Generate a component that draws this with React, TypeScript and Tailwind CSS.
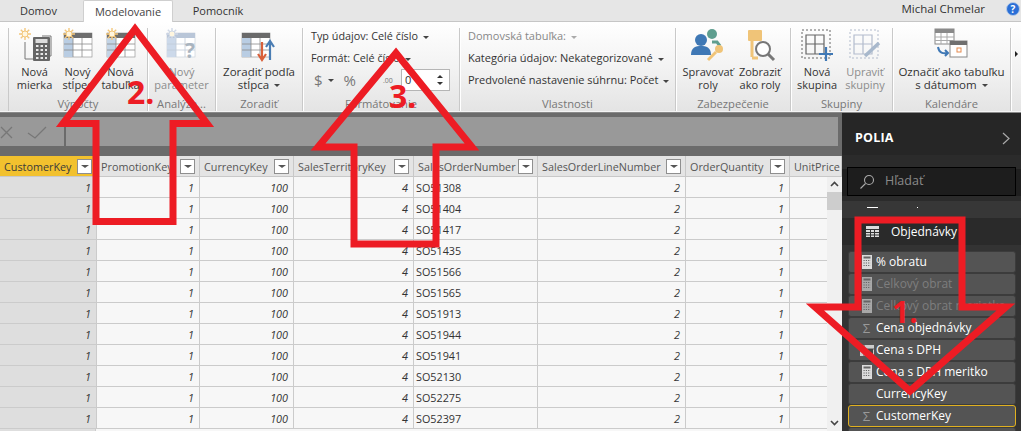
import React from "react";

const font = { fontFamily: '"Open Sans","Noto Sans",sans-serif' };

function Star({ x = 0, y = 0, faded = false }: { x?: number; y?: number; faded?: boolean }) {
  const c = faded ? "#cfd8e6" : "#f3c77c";
  return (
    <g transform={`translate(${x} ${y})`} stroke={c} strokeWidth="1.4">
      <path d="M6 0v12M0 6h12M1.8 1.8l8.4 8.4M10.2 1.8l-8.4 8.4" />
      <circle cx="6" cy="6" r="3" fill="#fff6df" stroke={c} strokeWidth="1" />
    </g>
  );
}

function TableIcon({ head = "#6e6e6e", col = "#b9cde3", x = 0, y = 0, line = "#8a8a8a" }: { head?: string; col?: string; x?: number; y?: number; line?: string }) {
  return (
    <g transform={`translate(${x} ${y})`}>
      <rect x="0" y="0" width="28" height="24" fill="#fff" stroke={line} strokeWidth="0.6" />
      <rect x="0" y="0" width="28" height="5" fill={head} />
      <rect x="0" y="5" width="9" height="19" fill={col} />
      <path d="M9 5v19M18 5v19M0 11h28M0 17h28" stroke={line} strokeWidth="0.8" />
    </g>
  );
}

function RibbonBtn({ w, icon, lines, off = false }: { w: number; icon: React.ReactNode; lines: string[]; off?: boolean }) {
  return (
    <div className={`flex flex-col items-center shrink-0 ${off ? "text-[#8c8c8c]" : "text-[#333]"}`} style={{ width: w }}>
      <div className="h-[37px] w-full flex justify-center">{icon}</div>
      <div className="text-[11px] leading-[13px] text-center whitespace-nowrap mt-[1px]">
        {lines.map((l, i) => (
          <div key={i}>{l}</div>
        ))}
      </div>
    </div>
  );
}

function Caret({ off = false }: { off?: boolean }) {
  return <span className={`inline-block align-middle ml-[5px] w-0 h-0 border-x-[3px] border-x-transparent border-t-[3px] ${off ? "border-t-[#aaa]" : "border-t-[#444]"}`} />;
}

function Group({ w, label, children, className = "" }: { w: number; label: string; children: React.ReactNode; className?: string }) {
  return (
    <div className="shrink-0 h-full flex flex-col border-r border-[#c9c9c9] shadow-[1px_0_0_#fff]" style={{ width: w }}>
      <div className={`flex-1 min-h-0 ${className}`}>{children}</div>
      <div className="h-[20px] text-[11.2px] text-[#777] text-center leading-[26px]">{label}</div>
    </div>
  );
}

const ic = "w-[40px] h-[34px]";

const cols = [
  { n: "CustomerKey", w: 97 },
  { n: "PromotionKey", w: 103 },
  { n: "CurrencyKey", w: 94 },
  { n: "SalesTerritoryKey", w: 120 },
  { n: "SalesOrderNumber", w: 124 },
  { n: "SalesOrderLineNumber", w: 148 },
  { n: "OrderQuantity", w: 104 },
  { n: "UnitPrice", w: 52 },
];

const orders = ["SO51308", "SO51404", "SO51417", "SO51435", "SO51566", "SO51565", "SO51913", "SO51944", "SO51941", "SO52130", "SO52275", "SO52397"];
const vals = ["1", "1", "100", "4", "", "2", "1", ""];

function Filter() {
  return (
    <span className="absolute right-[4px] top-[3px] w-[15px] h-[15px] bg-white border border-[#8f8f8f] flex items-center justify-center">
      <span className="w-0 h-0 border-x-[4px] border-x-transparent border-t-[3px] border-t-[#555]" />
    </span>
  );
}

function DataTable() {
  return (
    <div className="relative flex-1 min-h-0 overflow-hidden bg-[#f7f7f7]">
      <div className="flex h-[21px] bg-[#e4e4e4] border-b border-[#c8c8c8]">
        {cols.map((c, i) => (
          <div key={c.n} className={`relative shrink-0 h-full border-r border-[#c8c8c8] pl-[4px] text-[10.8px] leading-[21px] whitespace-nowrap overflow-hidden ${i === 0 ? "bg-[#f2c12e] text-[#3a3a3a]" : "text-[#555]"}`} style={{ width: c.w }}>
            {c.n}
            {i < 7 && <Filter />}
          </div>
        ))}
      </div>
      {orders.map((o) => (
        <div key={o} className="flex h-[21px] border-b border-[#cbcbcb]">
          {cols.map((c, i) => (
            <div key={c.n} className={`shrink-0 h-full border-r border-[#cbcbcb] text-[10.8px] leading-[21px] text-[#333] ${i === 0 ? "bg-[#dedede]" : ""} ${i === 4 ? "text-left pl-[2px]" : "text-right italic pr-[5px]"}`} style={{ width: c.w }}>
              {i === 4 ? o : vals[i]}
            </div>
          ))}
        </div>
      ))}
      <div className="flex h-[3px]">
        <div className="w-[96px] bg-[#dedede] border-r border-[#cbcbcb]" />
      </div>
      <div className="absolute right-0 top-[21px] bottom-0 w-[15px] bg-[#f0f0f0] flex flex-col items-center">
        <svg width="15" height="15" viewBox="0 0 15 15" fill="none" stroke="#444" strokeWidth="1.6"><path d="M4 9l3.5-3.5L11 9" /></svg>
        <div className="w-full h-[18px] bg-[#cdcdcd]" />
        <div className="flex-1" />
        <svg width="15" height="15" viewBox="0 0 15 15" fill="none" stroke="#444" strokeWidth="1.6"><path d="M4 5l3.5 3.5L11 5" /></svg>
      </div>
    </div>
  );
}

function Calc({ dim = false }: { dim?: boolean }) {
  return (
    <svg width="10" height="14" viewBox="0 0 10 14" className="shrink-0">
      <rect width="10" height="14" fill={dim ? "#a8a8a8" : "#dcdcdc"} />
      <rect x="1.5" y="1.5" width="7" height="2" fill="#666" />
      <path d="M1.5 5.5h7M1.5 8h7M1.5 10.5h7" stroke="#666" strokeWidth="1" strokeDasharray="1.2 1.1" />
    </svg>
  );
}

function Field({ name, kind, dim = false, sel = false }: { name: string; kind: string; dim?: boolean; sel?: boolean }) {
  return (
    <div className={`h-[22px] shrink-0 mx-[6px] w-[168px] rounded-[3px] bg-[#545454] flex items-center border ${sel ? "border-[#e0b020]" : "border-[#3c3c3c]"}`}>
      <span className="w-[29px] flex justify-center shrink-0 pl-[6px] text-[#999] text-[13px] leading-none">
        {kind === "calc" && <Calc dim={dim} />}
        {kind === "sum" && "Σ"}
        {kind === "fx" && (
          <svg width="14" height="11" viewBox="0 0 14 11"><rect width="14" height="11" fill="#ccc" /><path d="M4 0v11M0 4h14" stroke="#555" /><rect x="7" y="4" width="6" height="6" fill="#444" /></svg>
        )}
      </span>
      <span className={`text-[12px] whitespace-nowrap -ml-[2px] ${dim ? "text-[#7e7e7e]" : "text-white"}`}>{name}</span>
    </div>
  );
}

function FieldsPane() {
  return (
    <div className="w-[179px] shrink-0 bg-[#1f1f1f] flex flex-col overflow-hidden">
      <div className="h-[42px] shrink-0 bg-[#262626] flex items-center justify-between pl-[13px] pr-[10px] pt-[9px]">
        <span className="text-white font-bold text-[12.5px] tracking-[0.2px]">POLIA</span>
        <svg width="9" height="13" viewBox="0 0 9 13" fill="none" stroke="#aaa" strokeWidth="1.2"><path d="M1 1l6 5.5L1 12" /></svg>
      </div>
      <div className="h-[14px] shrink-0 bg-[#2b2b2b]" />
      <div className="relative mx-[5px] h-[29px] -mt-[2px] shrink-0 bg-[#1d1d1d] border border-black flex items-center pl-[11px] gap-[10px]">
        <svg width="16" height="16" viewBox="0 0 16 16" fill="none" stroke="#aaa" strokeWidth="1.1"><circle cx="10" cy="6" r="4.5" /><path d="M6.5 9.5L1.5 14.5" /></svg>
        <span className="text-[#8a8a8a] text-[12.5px]">Hľadať</span>
      </div>
      <div className="h-[5px] shrink-0 bg-[#2b2b2b]" />
      <div className="h-[17px] shrink-0 bg-[#373737] relative">
        <span className="absolute left-[25px] top-[6px] w-[11px] h-[1px] bg-white" />
        <span className="absolute left-[75px] top-[6px] w-[1px] h-[1px] bg-white" />
      </div>
      <div className="h-[27px] shrink-0 bg-[#2a2a2a] flex items-center pl-[24px]">
        <svg width="13" height="11" viewBox="0 0 13 11"><rect width="13" height="11" fill="#ddd" /><path d="M0 3.5h13M0 6.5h13M0 9h13M4.5 3v8M8.5 3v8" stroke="#333" /></svg>
        <span className="text-white text-[12px] ml-[12px]">Objednávky</span>
      </div>
      <div className="h-[6px] shrink-0 bg-[#333]" />
      <div className="flex flex-col bg-[#333]">
        <Field name="% obratu" kind="calc" />
        <Field name="Celkový obrat" kind="calc" dim />
        <Field name="Celkový obrat meriatko" kind="calc" dim />
        <Field name="Cena objednávky" kind="sum" />
        <Field name="Cena s DPH" kind="fx" />
        <Field name="Cena s DPH meritko" kind="calc" />
        <Field name="CurrencyKey" kind="" />
        <Field name="CustomerKey" kind="sum" sel />
        <Field name="" kind="" />
      </div>
    </div>
  );
}

function Overlay() {
  return (
    <div className="absolute inset-0 pointer-events-none overflow-hidden">
      <svg width="1021" height="431" viewBox="0 0 1021 431" fill="none" stroke="#ed1c24" strokeWidth="7" strokeLinejoin="miter" className="absolute inset-0">
        <path d="M135 29L63 123.5H96V221.5H173V123.5H207Z" />
        <path d="M396 53L318 147H354V244H436V147H472Z" />
        <path d="M858 220H962V307H1006L910 391L815 307H858Z" />
      </svg>
      <span className="absolute left-[127px] top-[72px] text-[#ed1c24] font-bold text-[32px] leading-[40px]">2.</span>
      <span className="absolute left-[389px] top-[76px] text-[#ed1c24] font-bold text-[32px] leading-[40px]">3.</span>
      <span className="absolute left-[892px] top-[292px] text-[#ed1c24] font-bold text-[30px] leading-[40px]">1.</span>
    </div>
  );
}

export default function App() {
  return (
    <div className="relative w-[1021px] h-[431px] overflow-hidden bg-[#6b6b6b] flex flex-col" style={font}>
      {/* tabs */}
      <div className="h-[22px] shrink-0 bg-[#e6e6e6] border-b border-[#c6c6c6] flex items-stretch text-[11px] text-[#333] relative">
        <div className="w-[83px] pl-[20px] leading-[21px]">Domov</div>
        <div className="w-[90px] h-[22px] bg-white border border-b-0 border-[#cfcfcf] rounded-t-[2px] text-center leading-[21px] text-[#444] z-10">Modelovanie</div>
        <div className="w-[90px] text-center leading-[21px]">Pomocník</div>
        <div className="flex-1" />
        <div className="leading-[17px] pr-[36px] text-[#333] text-[11.5px]">Michal Chmelar</div>
        <svg width="14" height="14" viewBox="0 0 14 14" className="absolute right-[1px] top-[2px]"><circle cx="7" cy="7" r="6.5" fill="#2a6fd6" stroke="#b6cbe8" /><text x="7" y="10.5" textAnchor="middle" fontSize="10" fontWeight="700" fill="#fff">?</text></svg>
      </div>
      {/* ribbon */}
      <div className="h-[90px] shrink-0 bg-gradient-to-b from-[#ffffff] via-[#f3f3f3] to-[#e4e4e4] flex pt-[6px] border-b border-[#f4f4f4]">
        <div className="w-[9px] shrink-0 border-r border-[#c9c9c9]" />
        <Group w={139} label="Výpočty" className="flex pl-[4px]">
          <RibbonBtn w={43} lines={["Nová", "mierka"]} icon={
            <svg className={ic} viewBox="0 0 40 34" fill="none"><path d="M10 14v17h11M27 8h9v20h-2" stroke="#777" /><rect x="18" y="9" width="17" height="24" rx="1" fill="#666" /><rect x="20.5" y="11" width="12" height="4" fill="#ddd" /><path d="M21 18h11M21 22h11M21 26h11M21 30h11" stroke="#e8e8e8" strokeWidth="2" strokeDasharray="2.5 2" /><Star x={4} y={0} /></svg>
          } />
          <RibbonBtn w={43} lines={["Nový", "stĺpec"]} icon={
            <svg className={ic} viewBox="0 0 40 34"><TableIcon x={6} y={5} /><Star x={5} y={0} /></svg>
          } />
          <RibbonBtn w={43} lines={["Nová", "tabuľka"]} icon={
            <svg className={ic} viewBox="0 0 40 34"><TableIcon x={6} y={5} col="#c3d4e6" /><Star x={5} y={0} /></svg>
          } />
        </Group>
        <Group w={68} label="Analýza..." className="flex justify-center">
          <RibbonBtn w={60} off lines={["Nový", "parameter"]} icon={
            <svg className={ic} viewBox="0 0 40 34"><TableIcon x={5} y={5} head="#b9c6d8" col="#ccd9ea" line="#c2cbd8" /><Star x={4} y={0} faded /><text x="28" y="30" fontSize="21" fontWeight="700" fill="#a9b4bf" textAnchor="middle">?</text></svg>
          } />
        </Group>
        <Group w={87} label="Zoradiť" className="flex justify-center">
          <div className="flex flex-col items-center text-[#333]">
            <div className="h-[37px]">
              <svg className={ic} viewBox="0 0 40 34"><TableIcon x={3} y={5} head="#6a6a6a" /><path d="M23 14v17M19 26l4 6 4-6" stroke="#d9603a" strokeWidth="2.2" fill="none" /><path d="M31 32V14M27 19l4-6 4 6" stroke="#4a7db3" strokeWidth="2.2" fill="none" /></svg>
            </div>
            <div className="text-[11.5px] leading-[13px] text-center whitespace-nowrap mt-[1px]">Zoradiť podľa<br />stĺpca<Caret /></div>
          </div>
        </Group>
        <Group w={157} label="Formátovanie" className="pl-[8px] text-[10.8px] text-[#333] leading-[22px]">
          <div className="-mt-[3px] whitespace-nowrap">Typ údajov: Celé číslo<Caret /></div>
          <div className="whitespace-nowrap">Formát: Celé číslo<Caret /></div>
          <div className="flex items-center h-[22px] text-[#777] text-[15px]">
            <span className="ml-[3px]">$</span><Caret />
            <span className="ml-[10px]">%</span>
            <span className="ml-[27px] w-[18px] text-[7px] leading-[7px] text-[#777]">.00</span>
            <span className="w-[49px] h-[22px] bg-white border border-[#b5b5b5] text-[11px] text-[#333] leading-[20px] pl-[3px] relative block">0
              <span className="absolute right-[6px] top-[5px] w-0 h-0 border-x-[3px] border-x-transparent border-b-[3px] border-b-[#333]" />
              <span className="absolute right-[6px] bottom-[5px] w-0 h-0 border-x-[3px] border-x-transparent border-t-[3px] border-t-[#333]" />
            </span>
          </div>
        </Group>
        <Group w={216} label="Vlastnosti" className="pl-[8px] text-[11px] text-[#333] leading-[22px]">
          <div className="-mt-[3px] text-[#888] whitespace-nowrap">Domovská tabuľka:<Caret off /></div>
          <div className="whitespace-nowrap">Kategória údajov: Nekategorizované<Caret /></div>
          <div className="whitespace-nowrap">Predvolené nastavenie súhrnu: Počet<Caret /></div>
        </Group>
        <Group w={115} label="Zabezpečenie" className="flex pl-[6px]">
          <RibbonBtn w={52} lines={["Spravovať", "roly"]} icon={
            <svg className={ic} viewBox="0 0 40 34"><circle cx="24" cy="6" r="5" fill="#5f9e8f" /><circle cx="13" cy="12" r="6" fill="#3f78b5" /><path d="M3 27c0-8 5-9 10-9s10 1 10 9z" fill="#3f78b5" /><path d="M24 14l5 0 3 4" stroke="#5f9e8f" strokeWidth="3" fill="none" /><circle cx="31" cy="21" r="4" fill="#f0c478" /><path d="M28 24l-8 8" stroke="#f0c478" strokeWidth="3" /></svg>
          } />
          <RibbonBtn w={52} lines={["Zobraziť", "ako roly"]} icon={
            <svg className={ic} viewBox="0 0 40 34" fill="none"><rect x="8" y="2" width="14" height="11" rx="1" fill="#f0c478" /><path d="M12 13v16M12 30h6" stroke="#f0c478" strokeWidth="3" /><circle cx="23" cy="21" r="7" fill="#fff" stroke="#777" strokeWidth="2" /><path d="M28 26l6 6" stroke="#777" strokeWidth="3" /></svg>
          } />
        </Group>
        <Group w={102} label="Skupiny" className="flex pl-[2px]">
          <RibbonBtn w={48} lines={["Nová", "skupina"]} icon={
            <svg className={ic} viewBox="0 0 40 34" fill="none"><rect x="5" y="2" width="28" height="28" stroke="#666" strokeDasharray="2 2" /><path d="M9 7h18v19H9zM18 7v19M9 16h18" stroke="#666" strokeWidth="1.2" /><path d="M29 19v14M22 26h14" stroke="#3f78b5" strokeWidth="2.2" /></svg>
          } />
          <RibbonBtn w={48} off lines={["Upraviť", "skupiny"]} icon={
            <svg className={ic} viewBox="0 0 40 34" fill="none"><rect x="5" y="2" width="28" height="28" stroke="#b3bccd" strokeDasharray="2 2" /><path d="M9 7h18v19H9zM18 7v19M9 16h18" stroke="#b3bccd" strokeWidth="1.2" /><path d="M20 28l14-13" stroke="#a8b8cc" strokeWidth="3.5" /></svg>
          } />
        </Group>
        <Group w={118} label="Kalendáre" className="flex justify-center">
          <div className="flex flex-col items-center text-[#333]">
            <div className="h-[37px]">
              <svg className={ic} viewBox="0 0 40 34" fill="none"><rect x="4" y="1" width="19" height="15" fill="#fff" stroke="#888" /><rect x="4" y="1" width="19" height="4" fill="#8a8a8a" /><path d="M4 9h19M4 12.5h19M10 5v11M16 5v11" stroke="#aaa" /><rect x="19" y="13" width="17" height="16" fill="#fff" stroke="#888" /><rect x="19" y="13" width="17" height="4" fill="#6f6f6f" /><rect x="26" y="20" width="4" height="4" stroke="#e58a4e" /><path d="M7 19c1 6 5 7 10 6M14 22l3 3-3 3" stroke="#3f78b5" strokeWidth="2" /></svg>
            </div>
            <div className="text-[11.5px] leading-[13px] text-center whitespace-nowrap mt-[1px]">Označiť ako tabuľku<br />s dátumom<Caret /></div>
          </div>
        </Group>
        <div className="flex-1 flex items-center justify-center pb-[32px]">
          <span className="w-0 h-0 border-y-[3px] border-y-transparent border-l-[3px] border-l-[#222]" />
        </div>
      </div>
      {/* body */}
      <div className="flex flex-1 min-h-0 border-t border-[#8a8a8a]">
        <div className="flex-1 min-w-0 flex flex-col">
          <div className="h-[4px] shrink-0 bg-[#6b6b6b]" />
          <div className="h-[29px] shrink-0 bg-[#999] flex items-center mr-[4px]">
            <svg width="64" height="29" viewBox="0 0 64 29" fill="none" className="shrink-0"><path d="M1 10l11 11M12 10L1 21" stroke="#777" strokeWidth="1.3" /><path d="M28 16l7 5 11-11" stroke="#777" strokeWidth="1.3" /></svg>
            <span className="w-[2px] h-full bg-[#6b6b6b]" />
          </div>
          <div className="h-[10px] shrink-0 bg-[#6b6b6b]" />
          <DataTable />
        </div>
        <FieldsPane />
      </div>
      <Overlay />
    </div>
  );
}
